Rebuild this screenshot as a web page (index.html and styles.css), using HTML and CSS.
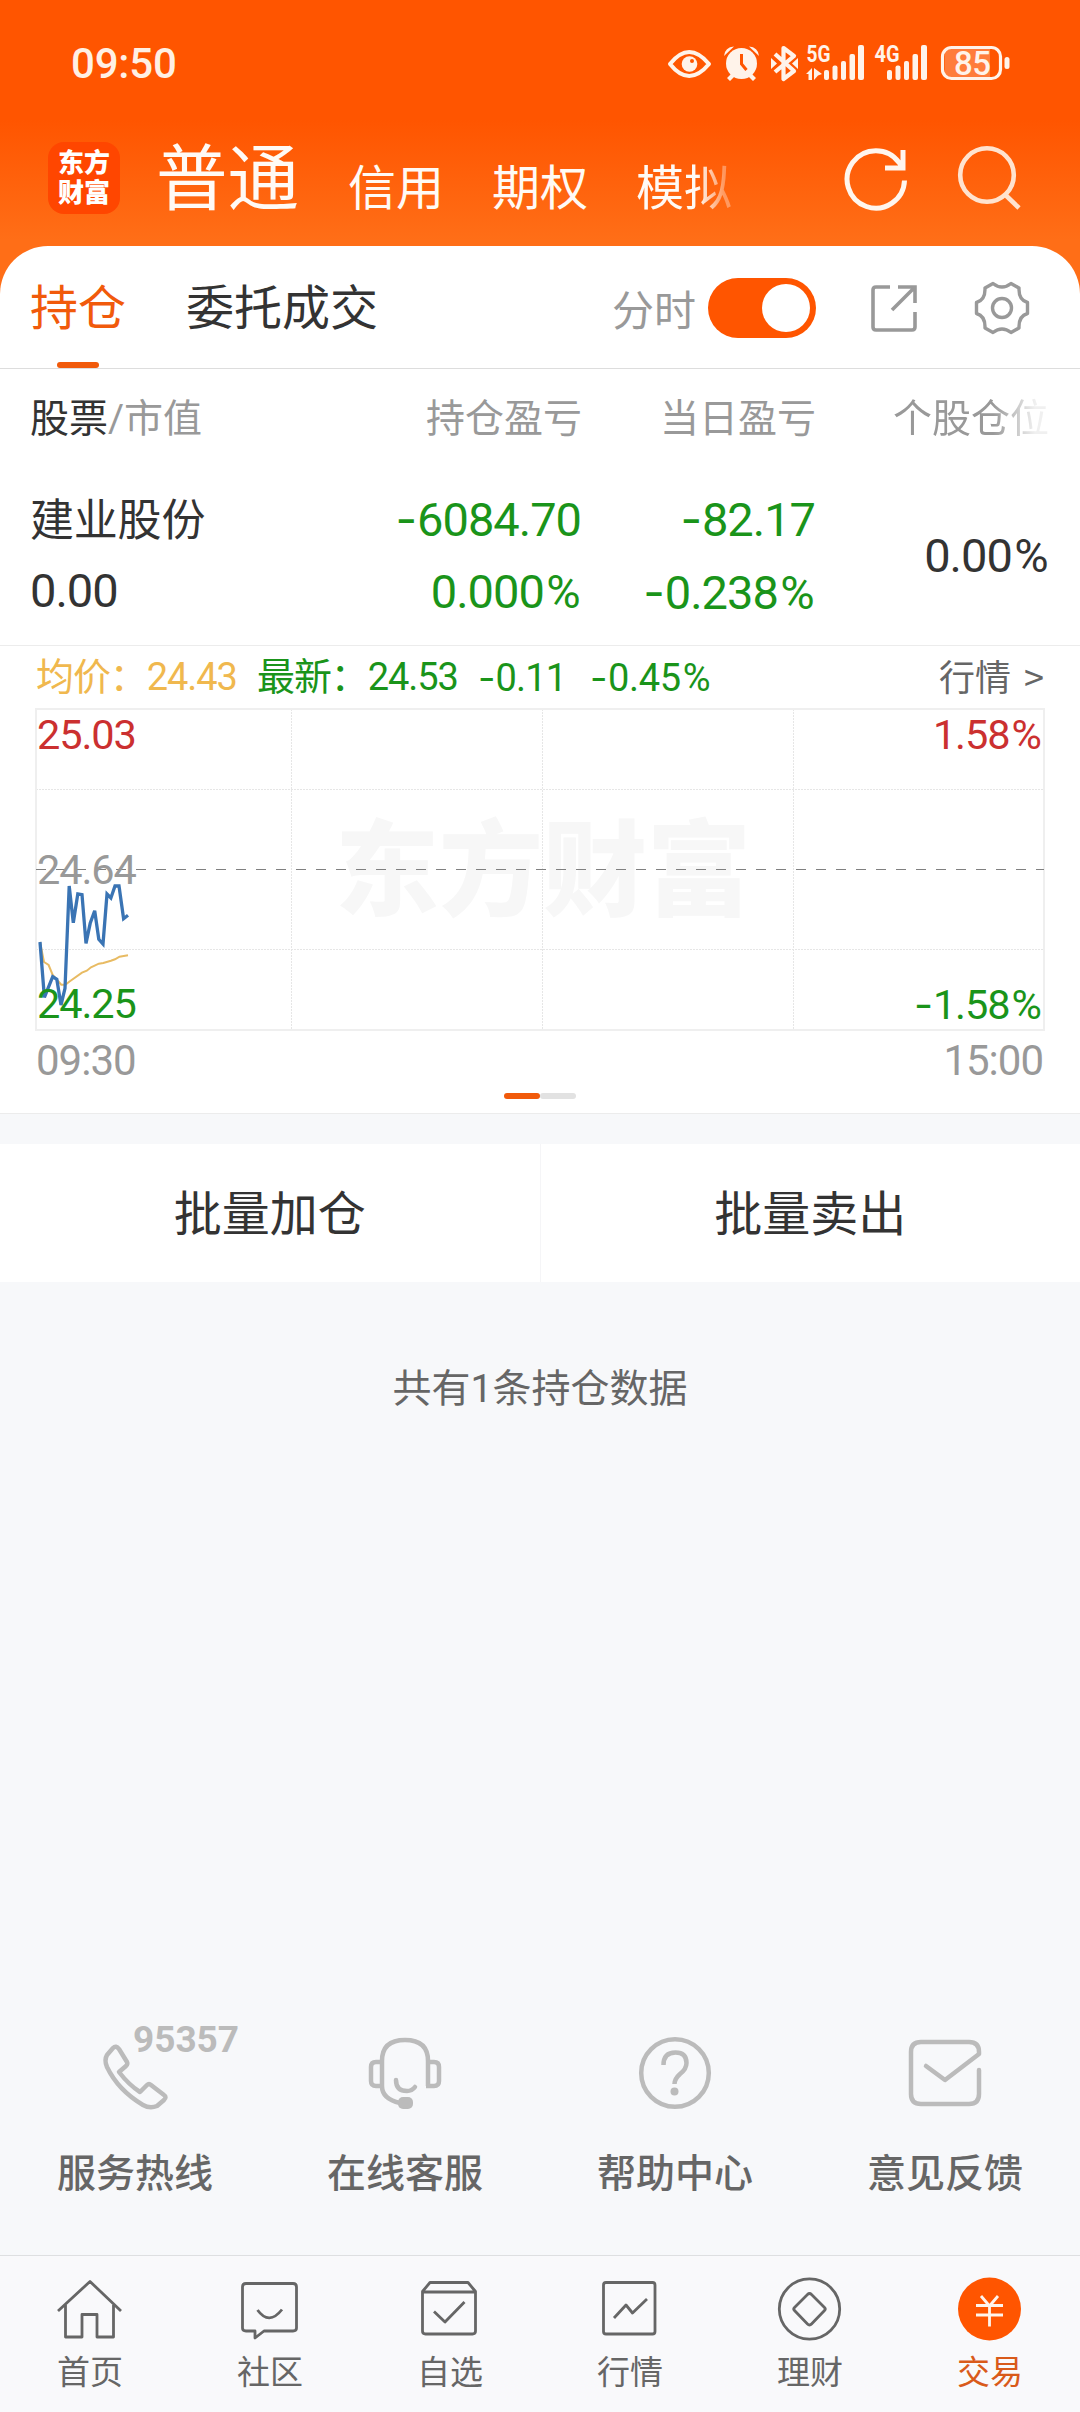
FILE: index.html
```html
<!DOCTYPE html>
<html lang="zh-CN">
<head>
<meta charset="utf-8">
<title>东方财富 交易</title>
<link rel="stylesheet" href="styles.css">
</head>
<body>
<div class="page">
  <header class="header">
    <div class="status">
      <span class="clock">09:50</span>
      <svg class="status-icons" width="344" height="60" viewBox="666 33 344 60">
        <g fill="none" stroke="#fff3ea" stroke-width="4">
          <path d="M670 64Q689 40 709 64Q689 88 670 64Z" stroke-linejoin="round"/>
          <path d="M775 54l19 17-10.500 8V48l10.500 8-19 16" stroke-linejoin="round" stroke-width="4.200"/>
          <rect x="942.500" y="47.500" width="58" height="31" rx="9" stroke-width="3.200"/>
        </g>
        <g fill="#fff3ea">
          <circle cx="689.500" cy="64" r="7.800"/>
          <circle cx="741.500" cy="63.500" r="15.500"/>
          <path d="M724 56q1-9 10-9.500zM759 56q-1-9-10-9.500zM727 78l6-6 3 3-6 6zM756 78l-6-6-3 3 6 6z"/>
          <path d="M771 58l6 5.500-6 5.500zM798 58l-6 5.500 6 5.500z"/>
          <path d="M806 74l6-6v12h-3.500v-6zM814 80V68l8 6-4 1.500z"/>
          <rect x="824" y="70" width="5" height="10" rx="2"/><rect x="832.500" y="65.500" width="5" height="14.500" rx="2"/><rect x="841" y="61" width="5" height="19" rx="2"/><rect x="849.500" y="54" width="5.500" height="26" rx="2"/><rect x="858" y="45" width="6" height="35" rx="2"/>
          <rect x="887" y="70" width="5" height="10" rx="2"/><rect x="895.500" y="65.500" width="5" height="14.500" rx="2"/><rect x="904" y="61" width="5" height="19" rx="2"/><rect x="912.500" y="54" width="5.500" height="26" rx="2"/><rect x="921" y="45" width="6" height="35" rx="2"/>
          <rect x="1004.500" y="57" width="5" height="12" rx="2.500"/>
          <path d="M945 52q0-3 4-3h41v28h-41q-4 0-4-3z" opacity=".25"/>
          <text class="net" x="806.500" y="62" textLength="24" lengthAdjust="spacingAndGlyphs">5G</text>
          <text class="net" x="874.500" y="62" textLength="25" lengthAdjust="spacingAndGlyphs">4G</text>
          <text class="battery" x="954" y="74.500" textLength="37">85</text>
        </g>
        <circle cx="692" cy="61" r="2" fill="#ff5500"/>
        <path d="M741.500 54v10l5 6" fill="none" stroke="#ff5500" stroke-width="3"/>
      </svg>
    </div>
    <div class="nav">
      <div class="logo"><span>东方</span><span>财富</span></div>
      <nav class="accounts">
        <span class="account current">普通</span>
        <span class="account">信用</span>
        <span class="account">期权</span>
        <span class="account fading">模拟</span>
      </nav>
      <div class="nav-icons">
        <svg width="66" height="66" viewBox="843 146 66 66" fill="none" stroke="#fff6ee" stroke-width="5">
          <path d="M904.500 180.500A28.700 28.700 0 1 1 899 162.500L903 167.500M903 150v18h-18"/>
        </svg>
        <svg width="66" height="66" viewBox="955 143 66 66" fill="none" stroke="#ffe3cf" stroke-width="4.600">
          <circle cx="987" cy="175" r="26.800"/><path d="M1005.500 195l13.500 13"/>
        </svg>
      </div>
    </div>
  </header>

  <main class="card">
    <div class="tabs">
      <span class="tab active">持仓</span>
      <span class="tab">委托成交</span>
      <span class="switch-label">分时</span>
      <span class="switch"><i class="knob"></i></span>
      <svg class="tool export" width="48" height="48" viewBox="870 284 48 48" fill="none" stroke="#999" stroke-width="3.600">
        <path d="M890 287h-14q-3 0-3 3v37q0 3 3 3h36q3 0 3-3v-15M898 287h17v16M914 288l-22 22"/>
      </svg>
      <svg class="tool" width="58" height="58" viewBox="973 279 58 58" fill="none" stroke="#999" stroke-width="3.400" stroke-linejoin="round">
        <path d="M993 283.500Q1002 290.500 1011 283.500L1019 288Q1018.500 300 1027.500 302.500V313.500Q1018.500 316 1019 328L1011 332.500Q1002 325.500 993 332.500L985 328Q985.500 316 976.500 313.500V302.500Q985.500 300 985 288Z"/>
        <circle cx="1002" cy="308" r="9.500"/>
      </svg>
    </div>

    <div class="grid head">
      <span><b>股票</b>/市值</span><span>持仓盈亏</span><span>当日盈亏</span><span class="fade-col">个股仓位</span>
    </div>

    <div class="grid holding">
      <div class="stack left"><span class="name">建业股份</span><span>0.00</span></div>
      <div class="stack down"><span><i class="minus">-</i>6084.70</span><span>0.000<i class="pct">%</i></span></div>
      <div class="stack down"><span><i class="minus">-</i>82.17</span><span><i class="minus">-</i>0.238<i class="pct">%</i></span></div>
      <div class="ratio">0.00<i class="pct">%</i></div>
    </div>

    <div class="quote">
      <span class="avg">均价：24.43</span>
      <span class="last">最新：24.53</span>
      <span class="change"><i class="minus">-</i>0.11</span>
      <span class="percent"><i class="minus">-</i>0.45<i class="pct">%</i></span>
      <span class="more">行情 &gt;</span>
    </div>

    <div class="chart">
      <div class="watermark">东方财富</div>
      <svg class="plot" width="1010" height="323" viewBox="35 708 1010 323" fill="none">
        <path d="M36 789.500H1044M36 949.500H1044M291.500 709V1030M542.500 709V1030M793.500 709V1030" stroke="#e6e6e6" stroke-width="1" stroke-dasharray="2 1"/>
        <rect x="36" y="709" width="1008" height="321" stroke="#efefef" stroke-width="2"/>
        <path d="M36 869.500H1044" stroke="#808080" stroke-dasharray="10 10"/>
        <polyline stroke="#e8bb63" stroke-width="2" points="40,942 44,962 48.600,965 52.700,975 61.300,984.700 65.400,984.700 69.200,981.700 82,972.700 86.800,970.700 91,967.300 98.800,963.700 103.300,963 110.900,960.700 115,959.300 119.500,956.700 128,955.300"/>
        <polyline stroke="#3a74b4" stroke-width="3.300" points="40,942 44.400,997.300 52.700,976.700 56.800,979.300 61,1005 65,988.300 69.200,886 73.300,922.700 77.800,894 82,894.700 86,943.300 90.200,923.300 94.700,910.700 98.800,939.300 103,944 107,894 110.900,898 115,886 119,886 123.600,918.700 128,915.300"/>
      </svg>
      <div class="scale">
        <div class="scale-row"><span class="up">25.03</span><span class="up">1.58<i class="pct">%</i></span></div>
        <div class="scale-row"><span class="flat">24.64</span></div>
        <div class="scale-row"><span class="fall">24.25</span><span class="fall"><i class="minus">-</i>1.58<i class="pct">%</i></span></div>
      </div>
    </div>
    <div class="times"><span>09:30</span><span>15:00</span></div>
    <div class="pager"><i class="on"></i><i></i></div>
  </main>

  <div class="actions"><span>批量加仓</span><span>批量卖出</span></div>
  <p class="count">共有1条持仓数据</p>

  <div class="services">
    <div class="service">
      <svg width="140" height="90" viewBox="65 2024 140 90" fill="none" stroke="#bbb" stroke-width="4.500" stroke-linejoin="round" overflow="visible">
        <path d="M113 2048Q116 2045 119 2049L127 2062Q128 2064 126 2066L119 2072Q129 2085 140 2092L147 2085Q149 2083 151 2085L164 2095Q167 2097 164 2100L157 2106Q150 2109 143 2105Q118 2090 107 2067Q104 2060 107 2055Z"/>
        <text class="hotline" x="133" y="2052" textLength="106">95357</text>
      </svg>
      <span>服务热线</span>
    </div>
    <div class="service">
      <svg width="80" height="90" viewBox="365 2024 80 90" fill="none" stroke="#bbb" stroke-width="4.500">
        <path d="M382 2086V2061Q382 2040 405 2040Q428 2040 428 2061V2086M382 2086Q382 2099 400 2103" />
        <path d="M382 2062h-6q-5 0-5 5v14q0 5 5 5h6M428 2062h6q5 0 5 5v14q0 5-5 5h-8"/>
        <path d="M396 2080Q396 2091 407 2091Q412 2091 415 2087" stroke-linecap="round"/>
        <rect x="398" y="2097" width="15" height="12" rx="5" fill="#bbb" stroke="none"/>
      </svg>
      <span>在线客服</span>
    </div>
    <div class="service">
      <svg width="80" height="90" viewBox="635 2024 80 90" fill="none" stroke="#bbb" stroke-width="4.500">
        <circle cx="675" cy="2073" r="33.800"/>
        <path d="M663.500 2065Q663.500 2052.500 675.500 2052.500Q686.500 2052.500 686.500 2063Q686.500 2069 680 2074Q674.500 2079 674.500 2084"/>
        <circle cx="674.500" cy="2091.500" r="4" fill="#bbb" stroke="none"/>
      </svg>
      <span>帮助中心</span>
    </div>
    <div class="service">
      <svg width="80" height="90" viewBox="905 2024 80 90" fill="none" stroke="#bbb" stroke-width="4.500" stroke-linecap="round" stroke-linejoin="round">
        <path d="M926 2066L945 2080L979 2054V2052Q979 2042 969 2042H921Q911 2042 911 2052V2094Q911 2104 921 2104H969Q979 2104 979 2094V2070"/>
      </svg>
      <span>意见反馈</span>
    </div>
  </div>

  <footer class="tabbar">
    <div class="item">
      <svg width="70" height="64" viewBox="55 2277 70 64"><path d="M58 2311L90 2281.500L121 2311M65.500 2305V2337H82V2314.500H97V2337H113.500V2305"/></svg>
      <span>首页</span>
    </div>
    <div class="item">
      <svg width="70" height="64" viewBox="235 2277 70 64"><path d="M246 2283.500H293Q296.500 2283.500 296.500 2287V2328Q296.500 2331 293 2331H264L255 2338V2331H246Q242.500 2331 242.500 2328V2287Q242.500 2283.500 246 2283.500ZM257.500 2310Q269 2326 282 2309.500"/></svg>
      <span>社区</span>
    </div>
    <div class="item">
      <svg width="70" height="64" viewBox="415 2277 70 64"><path d="M422.500 2291.500L430 2282.500H468L475.500 2291.500V2331Q475.500 2334 472.500 2334H425.500Q422.500 2334 422.500 2331ZM423 2292H475M434 2311.500L445 2322L464.500 2302"/></svg>
      <span>自选</span>
    </div>
    <div class="item">
      <svg width="70" height="64" viewBox="595 2277 70 64"><rect x="603.500" y="2282.500" width="51.500" height="51.500" rx="2.500"/><path d="M614 2318L626 2305L632.500 2313L647 2299"/></svg>
      <span>行情</span>
    </div>
    <div class="item">
      <svg width="70" height="64" viewBox="775 2277 70 64"><circle cx="809.500" cy="2309" r="30.200"/><path d="M807.500 2294.500Q809.500 2292.500 811.500 2294.500L824.500 2307.500Q826 2309 824.500 2310.500L811.500 2324Q809.500 2326 807.500 2324L794.500 2310.500Q793 2309 794.500 2307.500Z"/></svg>
      <span>理财</span>
    </div>
    <div class="item active">
      <svg width="70" height="64" viewBox="955 2277 70 64"><circle cx="989.500" cy="2309" r="31.500" fill="#ff5500" stroke="none"/><path d="M981 2296L989.500 2306L998 2296M976 2305.500H1003M976 2315H1003M989.500 2306V2326.500" stroke="#fff4ec"/></svg>
      <span>交易</span>
    </div>
  </footer>
</div>
</body>
</html>
```
FILE: styles.css
```css
* { box-sizing: border-box; }
body { margin: 0; }
i { font-style: normal; }

.page {
  display: flex;
  flex-direction: column;
  width: 1080px;
  height: 2412px;
  background: #f7f8fa;
  color: #333;
  font-family: Roboto, "Noto Sans CJK SC", sans-serif;
  white-space: nowrap;
  overflow: hidden;
}

.minus { margin-right: .02em; font-family: Inter, sans-serif; }
.pct { margin: 0 .03em 0 .05em; }

/* header */
.header {
  height: 294px;
  flex: none;
  background: linear-gradient(#ff5500 120px, #ff6e17 240px);
}
.status {
  display: flex;
  justify-content: space-between;
  height: 126px;
  padding: 33px 70px 0 71px;
}
.clock {
  font-size: 42px;
  line-height: 62px;
  font-weight: 500;
  color: #fff0e4;
  letter-spacing: -.2px;
}
.net { font-size: 23px; font-weight: 700; }
.battery { font-size: 33px; font-weight: 500; }
.nav {
  display: flex;
  height: 120px;
  padding: 16px 56px 0 48px;
}
.logo {
  display: flex;
  flex-direction: column;
  align-items: center;
  width: 72px;
  height: 72px;
  padding-top: 6px;
  border-radius: 16px;
  background: #ff4600;
  color: #fff;
  font-size: 26px;
  line-height: 30px;
  font-weight: 900;
}
.accounts {
  display: flex;
  align-items: baseline;
  gap: 48px;
  margin-left: 36px;
  color: #fffaf5;
}
.account { position: relative; top: 1px; font-size: 48px; line-height: 76px; }
.account.current { top: 0; font-size: 71.5px; margin-right: 1px; }
.fading {
  -webkit-mask-image: linear-gradient(90deg, #000 64%, rgba(0,0,0,.35) 92%);
  mask-image: linear-gradient(90deg, #000 64%, rgba(0,0,0,.35) 92%);
}
.nav-icons { display: flex; gap: 46px; margin: 4px 3px 0 auto; }
.nav-icons svg:last-child { overflow: visible; margin-top: -3px; }

/* holdings card */
.card {
  flex: none;
  height: 868px;
  margin-top: -48px;
  border-radius: 48px 48px 0 0;
  border-bottom: 1px solid #ececec;
  background: #fff;
}
.tabs {
  display: flex;
  align-items: center;
  height: 123px;
  padding: 1px 49px 0 30px;
  border-bottom: 1px solid #ddd;
}
.tab {
  position: relative;
  margin-right: 60px;
  font-size: 48px;
  line-height: 122px;
  top: 1px;
}
.tab.active { color: #f15a0b; }
.tab.active::after {
  content: "";
  position: absolute;
  left: 27px;
  bottom: 2px;
  width: 42px;
  height: 6px;
  border-radius: 3px;
  background: #f15a0b;
}
.switch-label { margin-left: auto; font-size: 42px; color: #999; }
.switch {
  width: 108px;
  height: 60px;
  margin: 0 54px 0 12px;
  padding: 6px;
  border-radius: 30px;
  background: #ff5500;
}
.knob {
  display: block;
  width: 48px;
  height: 48px;
  margin-left: auto;
  border-radius: 50%;
  background: #fff;
}
.export { margin-right: 55px; }

.grid {
  display: grid;
  grid-template-columns: 270px 282px 234px 233px;
  padding-left: 30px;
}
.head {
  height: 100px;
  font-size: 39px;
  line-height: 100px;
  color: #999;
  text-align: right;
}
.head span:first-child { text-align: left; }
.head b { font-weight: 400; color: #333; }
.fade-col {
  -webkit-mask-image: linear-gradient(90deg, #000 76%, rgba(0,0,0,.15) 94%);
  mask-image: linear-gradient(90deg, #000 76%, rgba(0,0,0,.15) 94%);
}
.holding {
  height: 177px;
  padding-top: 14px;
  border-bottom: 1px solid #ececec;
  font-size: 47px;
  letter-spacing: -1px;
  text-align: right;
}
.stack { display: flex; flex-direction: column; line-height: 72px; padding-right: 1px; }
.left { text-align: left; }
.name { position: relative; top: 2px; font-size: 44px; letter-spacing: -.2px; }
.down { color: #1a941a; }
.ratio { line-height: 146px; }

.quote {
  display: flex;
  height: 62px;
  padding: 0 36px;
  font-size: 38px;
  line-height: 62px;
  letter-spacing: -.8px;
  color: #1a941a;
}
.avg, .last { letter-spacing: -1.1px; }
.avg { width: 221px; color: #f0b84e; }
.last { width: 221px; }
.change { width: 112px; }
.percent { letter-spacing: -.3px; }
.more {
  margin-left: auto;
  color: #666;
  font-family: "Noto Sans CJK SC", sans-serif;
  font-size: 36px;
  line-height: 58px;
  letter-spacing: 0;
  word-spacing: 5px;
}

.chart { position: relative; height: 323px; margin: 0 35px; }
.plot { display: block; position: relative; }
.watermark {
  position: absolute;
  inset: 0 0 0 300px;
  font-size: 104px;
  font-weight: 900;
  line-height: 330px;
  color: #f7f7f7;
}
.scale {
  position: absolute;
  inset: 2px 3px 1px 2px;
  display: flex;
  flex-direction: column;
  justify-content: space-between;
  font-size: 41.5px;
  line-height: 50px;
  letter-spacing: -1.1px;
}
.scale-row { display: flex; justify-content: space-between; }
.up { color: #cb3030; }
.flat { color: #999; }
.fall { color: #1a941a; }
.times {
  display: flex;
  justify-content: space-between;
  height: 62px;
  padding: 0 37px 0 36px;
  font-size: 42px;
  line-height: 60px;
  letter-spacing: -1px;
  color: #999;
}
.pager { display: flex; justify-content: center; }
.pager i { width: 36px; height: 6px; border-radius: 3px; background: #e2e2e2; }
.pager .on { background: #f15a0b; }

/* batch actions */
.actions {
  display: flex;
  flex: none;
  height: 138px;
  margin-top: 30px;
  background: #fff;
  font-size: 48px;
  line-height: 141px;
  text-align: center;
}
.actions span { flex: 1; }
.actions span:first-child { border-right: 1px solid #f5f5f7; }
.count {
  margin: 77px 0 0;
  font-size: 39px;
  line-height: 60px;
  color: #666;
  text-align: center;
}

/* service shortcuts */
.services { display: flex; margin-top: auto; height: 231px; }
.service {
  display: flex;
  flex: 1;
  flex-direction: column;
  align-items: center;
  font-size: 39px;
  font-weight: 500;
  line-height: 60px;
  color: #666;
}
.service span { margin-top: 30px; }
.hotline { font-size: 37px; font-weight: 700; fill: #bbb; stroke: none; }

/* bottom navigation */
.tabbar {
  display: flex;
  flex: none;
  height: 157px;
  border-top: 1px solid #dedfe1;
  background: #f9f9fb;
}
.item {
  display: flex;
  flex: 1;
  flex-direction: column;
  align-items: center;
  padding-top: 21px;
  font-size: 33px;
  line-height: 44px;
  color: #666;
}
.item svg {
  fill: none;
  stroke: #666;
  stroke-width: 2.8;
  stroke-linejoin: round;
}
.item span { margin-top: 10px; }
.item.active { color: #d95a1a; }
```
